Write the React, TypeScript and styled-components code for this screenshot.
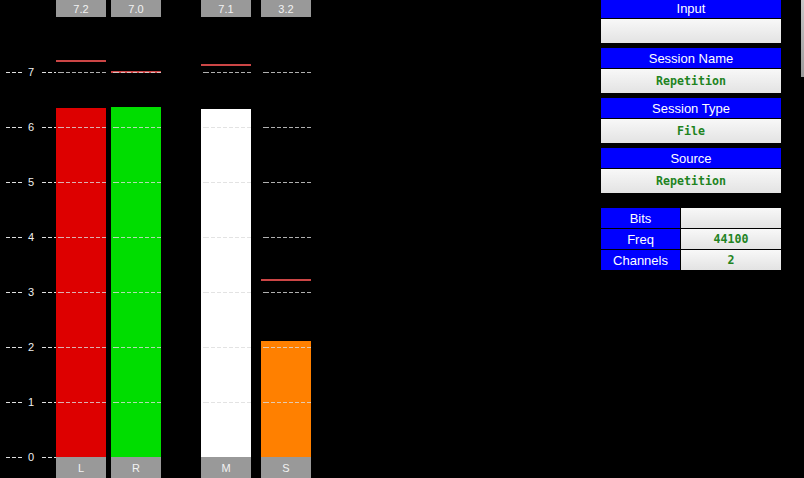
import React from 'react';
import styled, { createGlobalStyle } from 'styled-components';

const UNIT = 55;
const TOP_H = 17;
const METER_H = 440;
const BOTTOM_H = 21;
const MAX = 8;

const Global = createGlobalStyle`
  html, body { margin: 0; padding: 0; background: #000; }
  body {
    width: 804px;
    height: 478px;
    overflow: hidden;
    font-family: "Liberation Sans", Arial, sans-serif;
  }
`;

const Page = styled.div`
  position: relative;
  display: flex;
  width: 804px;
  height: 478px;
  background: #000;
  overflow: hidden;
`;

const Meters = styled.div`
  display: flex;
  height: 478px;
`;

const Axis = styled.div`
  position: relative;
  width: 56px;
  height: 100%;
`;

const Tick = styled.div`
  position: absolute;
  left: 6px;
  right: 0;
  height: 1px;
  display: flex;
  align-items: center;
`;

const Dash = styled.div<{ $w?: number }>`
  height: 1px;
  background: repeating-linear-gradient(to right, #e0e0e0 0 4px, transparent 4px 6px);
  ${(p) => (p.$w ? `width: ${p.$w}px; flex: none;` : 'flex: 1;')}
`;

const TickLabel = styled.span`
  width: 14px;
  margin-right: 4px;
  height: 11px;
  line-height: 11px;
  flex: none;
  text-align: center;
  font-size: 11px;
  color: #f0f0f0;
`;

const Group = styled.div<{ $gap: number; $before: number }>`
  display: flex;
  gap: ${(p) => p.$gap}px;
  margin-left: ${(p) => p.$before}px;
`;

const Channel = styled.div`
  width: 50px;
  display: flex;
  flex-direction: column;
`;

const ChannelLabel = styled.div<{ $h: number }>`
  height: ${(p) => p.$h}px;
  background: #999999;
  color: #f2f2f2;
  font-size: 11px;
  display: flex;
  align-items: center;
  justify-content: center;
`;

const MeterArea = styled.div`
  position: relative;
  height: ${METER_H}px;
`;

const Bar = styled.div<{ $color: string }>`
  position: absolute;
  left: 0;
  right: 0;
  bottom: 0;
  background: ${(p) => p.$color};
`;

const Peak = styled.div`
  position: absolute;
  left: 0;
  right: 0;
  height: 2px;
  background: #cc4646;
`;

const GridLine = styled.div`
  position: absolute;
  left: 0;
  right: 0;
  height: 1px;
  background: repeating-linear-gradient(to right, rgba(220, 220, 220, 0.8) 0 4px, transparent 4px 6px);
  background-position: 4px 0;
`;

const Panel = styled.div`
  width: 180px;
  margin-left: 290px;
  margin-top: -2px;
  display: flex;
  flex-direction: column;
`;

const Field = styled.div`
  display: flex;
  flex-direction: column;
  gap: 1px;
  margin-bottom: 5px;
`;

const Header = styled.div`
  height: 20px;
  background: #0000ff;
  color: #ffffff;
  font-size: 13px;
  display: flex;
  align-items: center;
  justify-content: center;
`;

const Value = styled.div<{ $h: number }>`
  height: ${(p) => p.$h}px;
  background: linear-gradient(to bottom, #f8f8f8, #e3e3e3);
  color: #1f841f;
  font-family: "DejaVu Sans Mono", "Liberation Mono", monospace;
  font-weight: bold;
  font-size: 11.6px;
  display: flex;
  align-items: center;
  justify-content: center;
`;

const InfoTable = styled.div`
  margin-top: 10px;
  display: grid;
  grid-template-columns: 79px 100px;
  grid-auto-rows: 20px;
  gap: 1px;
`;

const Edge = styled.div`
  position: absolute;
  right: 0;
  top: 0;
  width: 3px;
  height: 77px;
  background: linear-gradient(to bottom, #c8c8c8, #9a9a9a);
`;

type Ch = { name: string; value: number; peak: number; label: string; color: string };

const left: Ch[] = [
  { name: 'L', value: 6.345, peak: 7.2, label: '7.2', color: '#dd0000' },
  { name: 'R', value: 6.364, peak: 7.0, label: '7.0', color: '#00dd00' },
];
const right: Ch[] = [
  { name: 'M', value: 6.327, peak: 7.13, label: '7.1', color: '#ffffff' },
  { name: 'S', value: 2.11, peak: 3.22, label: '3.2', color: '#ff8000' },
];

const ticks = [0, 1, 2, 3, 4, 5, 6, 7];

const Meter: React.FC<{ ch: Ch }> = ({ ch }) => (
  <Channel>
    <ChannelLabel $h={TOP_H}>{ch.label}</ChannelLabel>
    <MeterArea>
      <Bar $color={ch.color} style={{ height: ch.value * UNIT }} />
      <Peak style={{ top: (MAX - ch.peak) * UNIT - 1 }} />
      {ticks.slice(1).map((t) => (
        <GridLine key={t} style={{ top: (MAX - t) * UNIT }} />
      ))}
    </MeterArea>
    <ChannelLabel $h={BOTTOM_H}>{ch.name}</ChannelLabel>
  </Channel>
);

const fields = [
  { title: 'Input', value: '' },
  { title: 'Session Name', value: 'Repetition' },
  { title: 'Session Type', value: 'File' },
  { title: 'Source', value: 'Repetition' },
];

const info = [
  { k: 'Bits', v: '' },
  { k: 'Freq', v: '44100' },
  { k: 'Channels', v: '2' },
];

export default function App() {
  return (
    <Page>
      <Global />
      <Meters>
        <Axis>
          {ticks.map((t) => (
            <Tick key={t} style={{ top: TOP_H + (MAX - t) * UNIT }}>
              <Dash $w={18} />
              <TickLabel>{t}</TickLabel>
              <Dash />
            </Tick>
          ))}
        </Axis>
        <Group $gap={5} $before={0}>
          {left.map((c) => (
            <Meter key={c.name} ch={c} />
          ))}
        </Group>
        <Group $gap={10} $before={40}>
          {right.map((c) => (
            <Meter key={c.name} ch={c} />
          ))}
        </Group>
      </Meters>
      <Panel>
        {fields.map((f) => (
          <Field key={f.title}>
            <Header>{f.title}</Header>
            <Value $h={24}>{f.value}</Value>
          </Field>
        ))}
        <InfoTable>
          {info.map((r) => (
            <React.Fragment key={r.k}>
              <Header>{r.k}</Header>
              <Value $h={20}>{r.v}</Value>
            </React.Fragment>
          ))}
        </InfoTable>
      </Panel>
      <Edge />
    </Page>
  );
}
